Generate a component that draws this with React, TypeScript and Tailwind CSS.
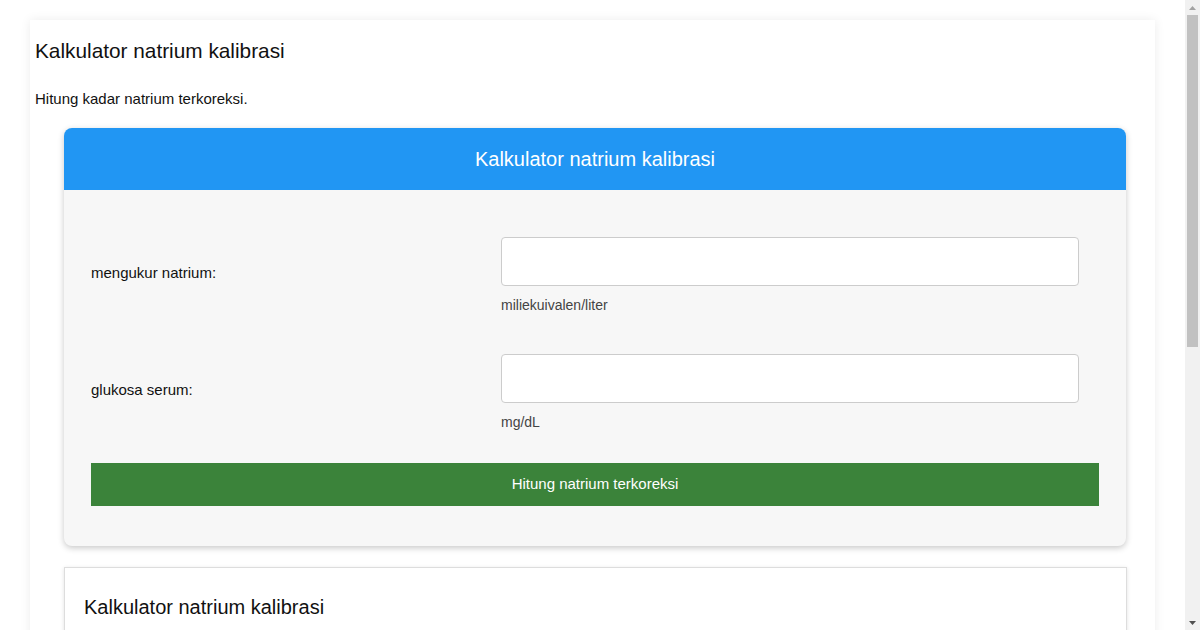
import React from "react";

const font = { fontFamily: '"Liberation Sans", Arial, sans-serif' };

function Field({ label, unit }: { label: string; unit: string }) {
  return (
    <div className="flex items-center">
      <label className="w-[410px] shrink-0 pb-[7px] text-[15px] leading-[17px] text-[#111]">{label}</label>
      <div className="flex-1 pr-[20px]">
        <input
          type="text"
          className="block h-[49px] w-full rounded-[4px] border border-[#ccc] bg-white px-3 outline-none"
        />
        <div className="mt-[9px] text-[14px] leading-[20px] text-[#444]">{unit}</div>
      </div>
    </div>
  );
}

function Scrollbar() {
  return (
    <div className="flex w-[15px] shrink-0 flex-col items-center bg-[#f1f1f1]">
      <div className="flex h-[15px] w-full items-center justify-center">
        <svg width="7" height="4" viewBox="0 0 7 4">
          <path d="M0 4 L3.5 0 L7 4 Z" fill="#a3a3a3" />
        </svg>
      </div>
      <div className="h-[332px] w-[11px] bg-[#c1c1c1]" />
      <div className="flex-1" />
      <div className="flex h-[15px] w-full items-center justify-center">
        <svg width="7" height="4" viewBox="0 0 7 4">
          <path d="M0 0 L7 0 L3.5 4 Z" fill="#505050" />
        </svg>
      </div>
    </div>
  );
}

export default function App() {
  return (
    <div className="flex h-screen overflow-hidden bg-white" style={font}>
      <main className="flex-1 overflow-hidden pt-[20px]">
        <div className="mx-auto w-[1125px] bg-white px-[5px] pt-[19px] pb-[40px] shadow-[0_0_10px_rgba(0,0,0,0.08)]">
          {/* Page heading */}
          <h1 className="text-[20.8px] leading-[24px] text-[#111]">Kalkulator natrium kalibrasi</h1>
          <p className="mt-[26px] text-[15px] leading-[20px] text-[#111]">Hitung kadar natrium terkoreksi.</p>

          {/* Calculator card */}
          <div className="mt-[19px] ml-[29px] w-[1062px] overflow-hidden rounded-[8px] bg-[#f7f7f7] shadow-[0_2px_6px_rgba(0,0,0,0.22)]">
            <div className="flex h-[62px] items-center justify-center bg-[#2196f3] text-[20px] text-white">
              Kalkulator natrium kalibrasi
            </div>
            <div className="px-[27px] pt-[47px] pb-[40px]">
              <Field label="mengukur natrium:" unit="miliekuivalen/liter" />
              <div className="h-[39px]" />
              <Field label="glukosa serum:" unit="mg/dL" />
              <button className="mt-[31px] flex h-[43px] w-full items-center justify-center bg-[#3b833a] text-[15px] text-white">
                Hitung natrium terkoreksi
              </button>
            </div>
          </div>

          {/* Info card */}
          <div className="mt-[21px] ml-[29px] h-[120px] w-[1063px] border border-[#ddd] bg-white px-[19px] pt-[27px] shadow-[0_1px_4px_rgba(0,0,0,0.12)]">
            <h2 className="text-[20px] leading-[24px] text-[#111]">Kalkulator natrium kalibrasi</h2>
          </div>
        </div>
      </main>
      <Scrollbar />
    </div>
  );
}
